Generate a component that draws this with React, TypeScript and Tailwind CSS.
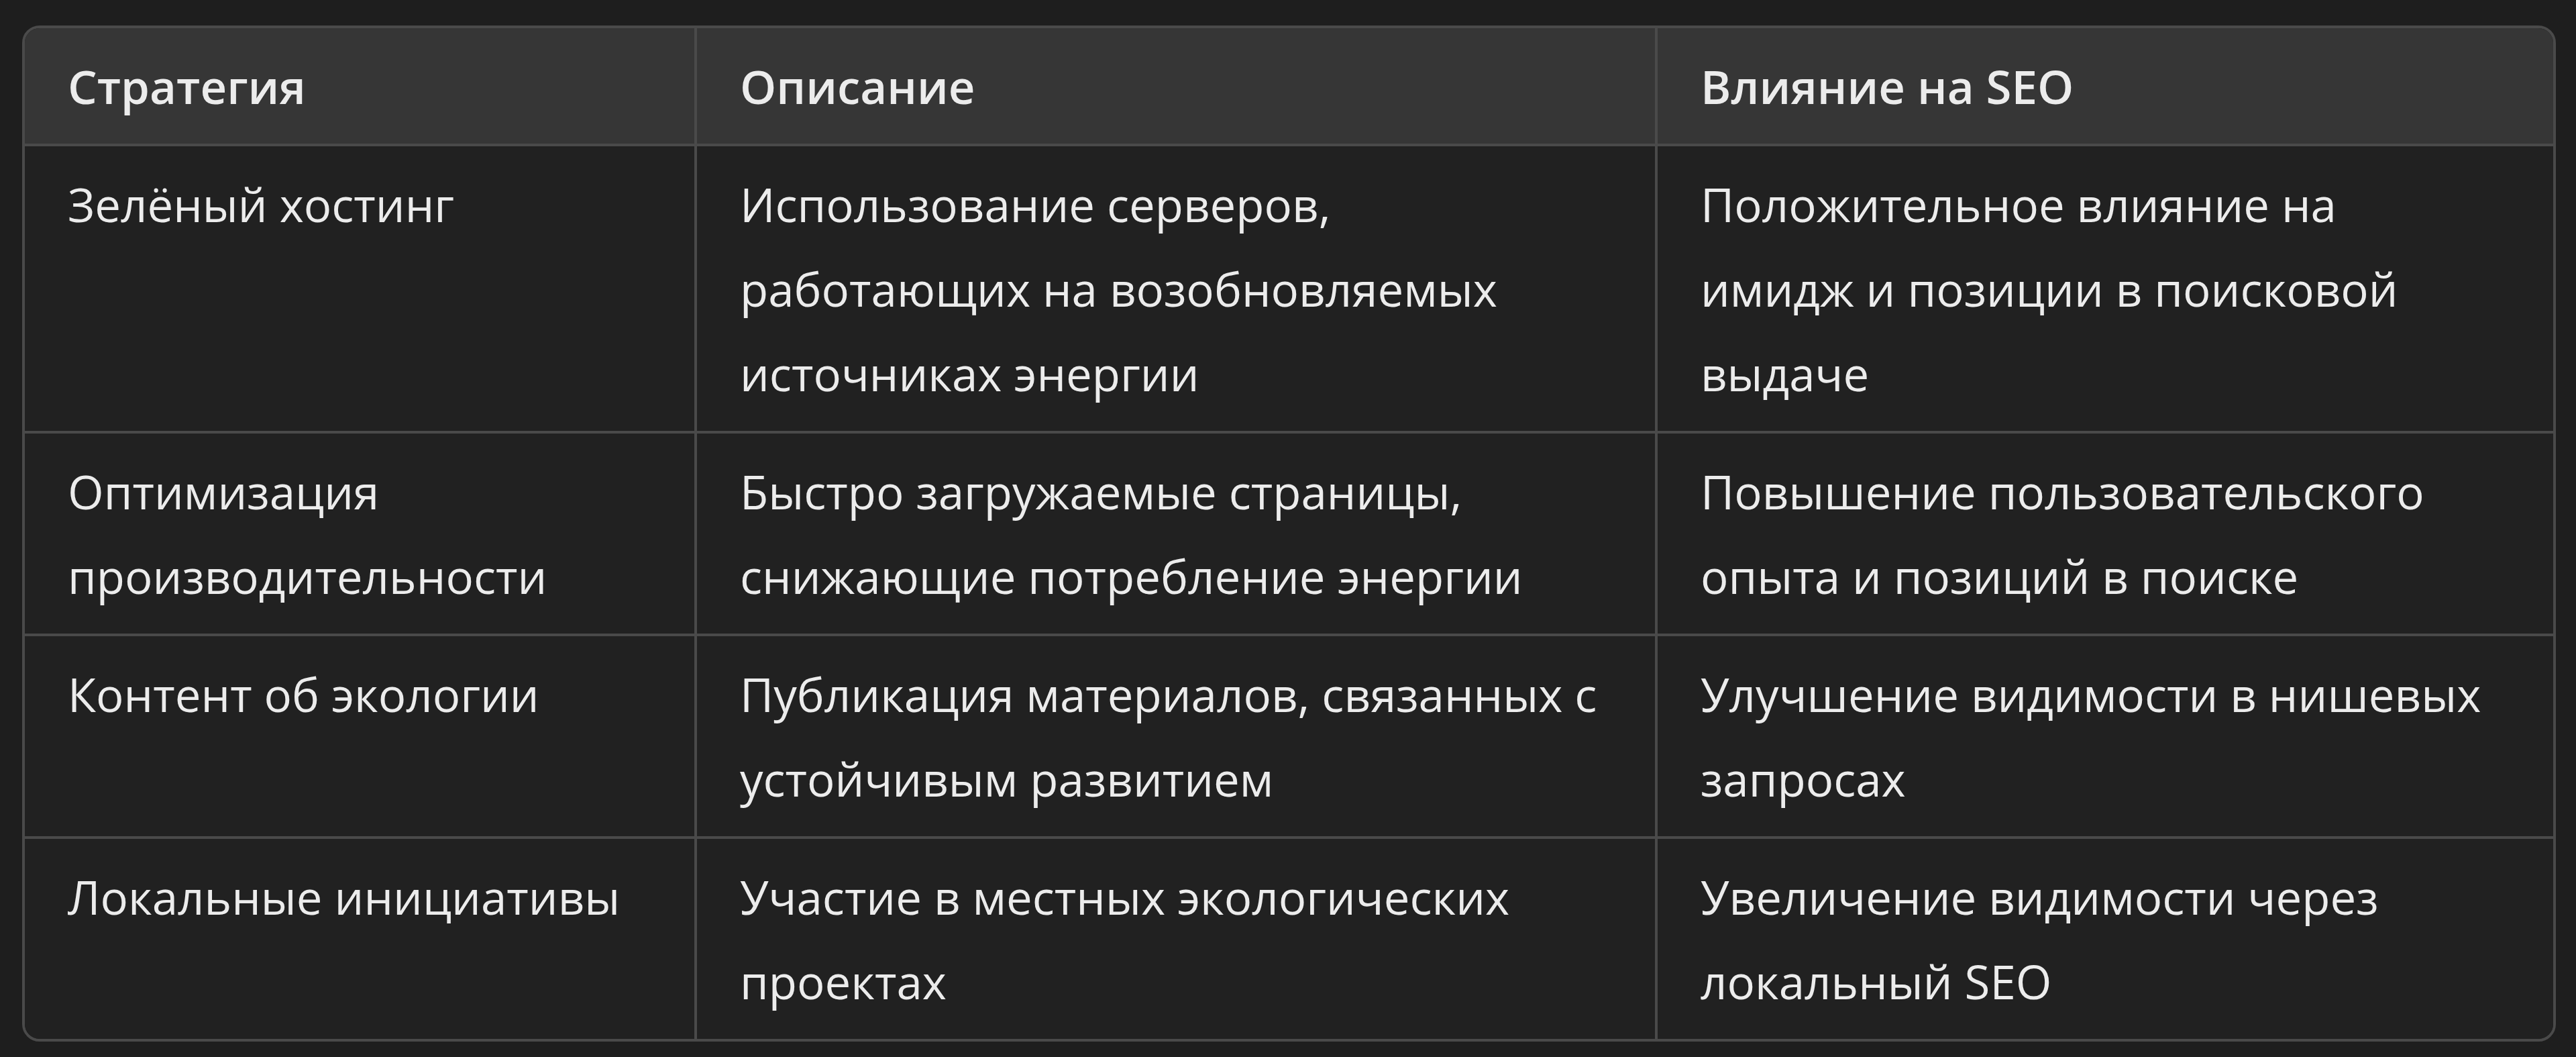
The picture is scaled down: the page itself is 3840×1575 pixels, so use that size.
const header = ["Стратегия", "Описание", "Влияние на SEO"];

const rows: string[][][] = [
  [
    ["Зелёный хостинг"],
    ["Использование серверов,", "работающих на возобновляемых", "источниках энергии"],
    ["Положительное влияние на", "имидж и позиции в поисковой", "выдаче"],
  ],
  [
    ["Оптимизация", "производительности"],
    ["Быстро загружаемые страницы,", "снижающие потребление энергии"],
    ["Повышение пользовательского", "опыта и позиций в поиске"],
  ],
  [
    ["Контент об экологии"],
    ["Публикация материалов, связанных с", "устойчивым развитием"],
    ["Улучшение видимости в нишевых", "запросах"],
  ],
  [
    ["Локальные инициативы"],
    ["Участие в местных экологических", "проектах"],
    ["Увеличение видимости через", "локальный SEO"],
  ],
];

function Cell({ lines, last, bottom, head }: { lines: string[]; last: boolean; bottom: boolean; head?: boolean }) {
  return (
    <div
      className={
        "py-[23px] pl-[64px] pr-4 border-[#4a4a4a] " +
        (last ? "" : "border-r-[4px] ") +
        (bottom ? "border-b-[4px] " : "") +
        (head ? "bg-[#363636] font-semibold" : "bg-[#212121]")
      }
    >
      {lines.map((l) => (
        <div key={l} className="whitespace-nowrap">
          {l}
        </div>
      ))}
    </div>
  );
}

export default function App() {
  return (
    <div className="min-h-[1575px] w-[3840px] bg-[#1e1e1e] pl-[33px] pr-[30px] pt-[38px] font-['Open_Sans',sans-serif] text-[69px] leading-[126px] text-[#ececec]">
      <div className="overflow-hidden rounded-[26px] border-[4px] border-[#4a4a4a]">
        <div className="grid grid-cols-[1002px_1432px_1fr]">
          {header.map((h, i) => (
            <Cell key={h} lines={[h]} last={i === 2} bottom head />
          ))}
          {rows.map((r, ri) =>
            r.map((c, ci) => (
              <Cell key={ri + "-" + ci} lines={c} last={ci === 2} bottom={ri < rows.length - 1} />
            ))
          )}
        </div>
      </div>
    </div>
  );
}
